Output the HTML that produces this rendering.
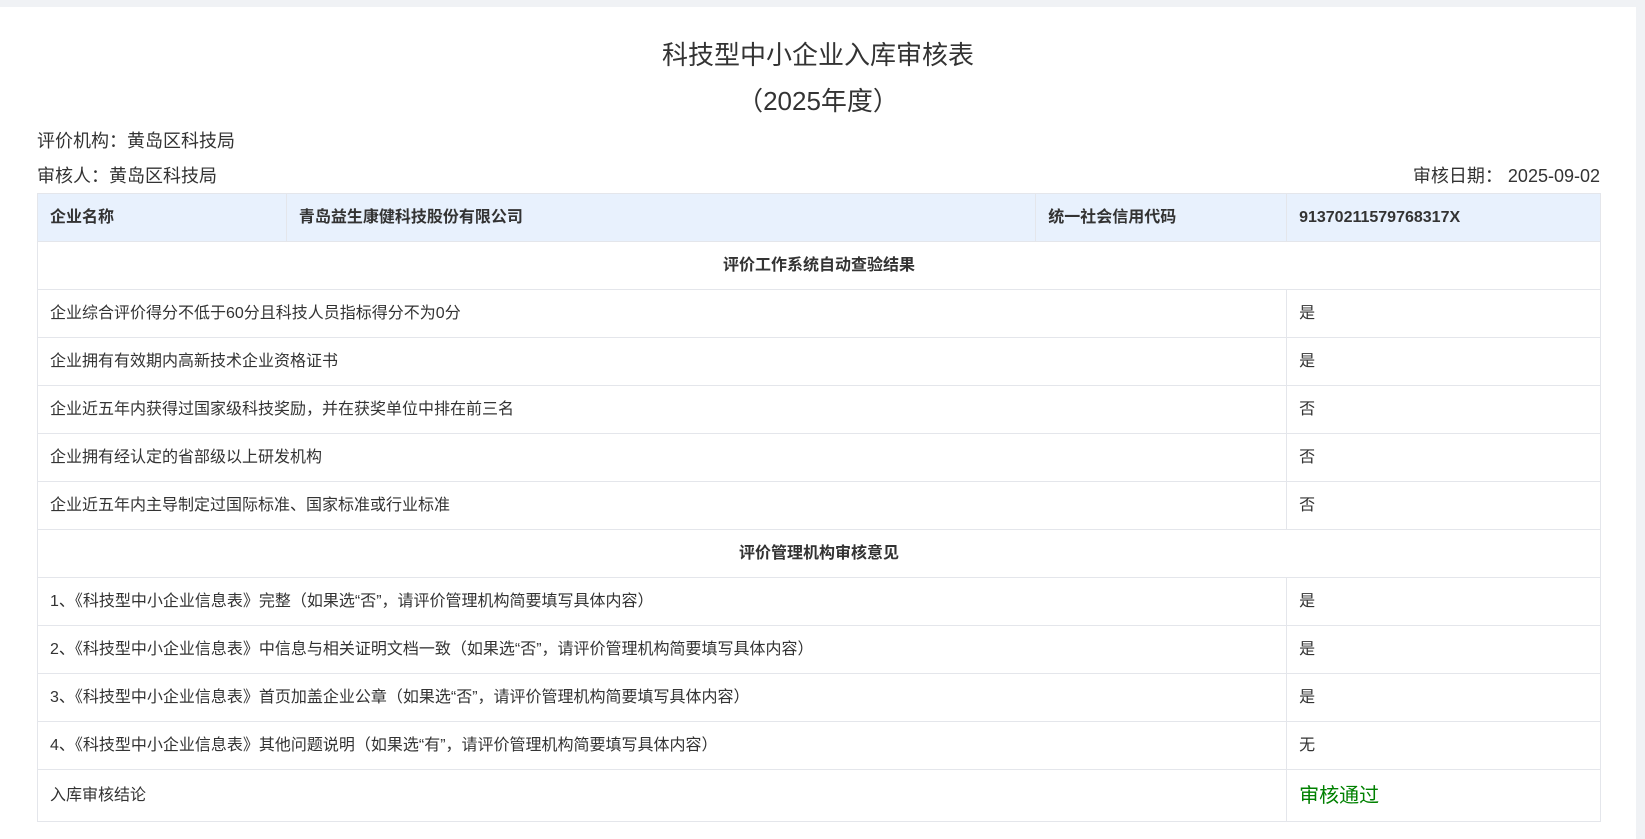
<!DOCTYPE html><html><head><meta charset="utf-8"><style>
body{margin:0;width:1645px;height:839px;background:#f0f2f5;font-family:"Liberation Sans","Noto Sans CJK SC",sans-serif;color:#333;overflow:hidden;position:relative}
.p{position:absolute;left:0;top:7px;width:1636px;height:832px;background:#fff}
.t{position:absolute;left:0;width:1636px;text-align:center;color:#333}
.a{position:absolute;font-size:18px;color:#333}
table{position:absolute;left:37px;top:193px;width:1564px;border-collapse:collapse;font-size:16px}
td{border:1px solid #e4e6eb;padding:1px 12px 0;height:46px;color:#333;line-height:20px;vertical-align:middle}
tr.h td{background:#e8f1fd;font-weight:bold}
td.c{text-align:center;font-weight:bold}
</style></head><body>
<div class="p"></div>
<div class="t" style="top:35px;font-size:26px">科技型中小企业入库审核表</div>
<div class="t" style="top:81px;font-size:26px">（2025年度）</div>
<div class="a" style="left:37px;top:127px">评价机构：黄岛区科技局</div>
<div class="a" style="left:37px;top:162px">审核人：黄岛区科技局</div>
<div class="a" style="right:45px;top:162px">审核日期：&nbsp;2025-09-02</div>
<table>
<colgroup><col style="width:249px"><col style="width:750px"><col style="width:251px"><col style="width:314px"></colgroup>
<tr class="h"><td>企业名称</td><td>青岛益生康健科技股份有限公司</td><td>统一社会信用代码</td><td>91370211579768317X</td></tr>
<tr><td colspan="4" class="c">评价工作系统自动查验结果</td></tr>
<tr><td colspan="3">企业综合评价得分不低于60分且科技人员指标得分不为0分</td><td>是</td></tr>
<tr><td colspan="3">企业拥有有效期内高新技术企业资格证书</td><td>是</td></tr>
<tr><td colspan="3">企业近五年内获得过国家级科技奖励，并在获奖单位中排在前三名</td><td>否</td></tr>
<tr><td colspan="3">企业拥有经认定的省部级以上研发机构</td><td>否</td></tr>
<tr><td colspan="3">企业近五年内主导制定过国际标准、国家标准或行业标准</td><td>否</td></tr>
<tr><td colspan="4" class="c">评价管理机构审核意见</td></tr>
<tr><td colspan="3">1、《科技型中小企业信息表》完整（如果选“否”，请评价管理机构简要填写具体内容）</td><td>是</td></tr>
<tr><td colspan="3">2、《科技型中小企业信息表》中信息与相关证明文档一致（如果选“否”，请评价管理机构简要填写具体内容）</td><td>是</td></tr>
<tr><td colspan="3">3、《科技型中小企业信息表》首页加盖企业公章（如果选“否”，请评价管理机构简要填写具体内容）</td><td>是</td></tr>
<tr><td colspan="3">4、《科技型中小企业信息表》其他问题说明（如果选“有”，请评价管理机构简要填写具体内容）</td><td>无</td></tr>
<tr><td colspan="3" style="height:50px">入库审核结论</td><td style="color:#008000;font-size:20px;line-height:24px">审核通过</td></tr>
</table>
</body></html>
